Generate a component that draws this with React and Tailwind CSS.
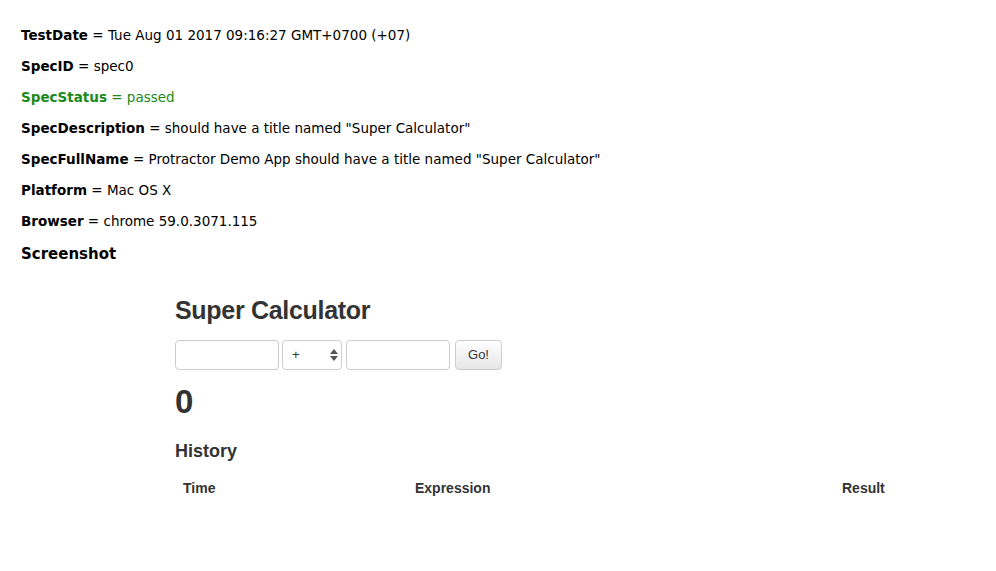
import React from 'react';

const rows = [
    ['TestDate', 'Tue Aug 01 2017 09:16:27 GMT+0700 (+07)'],
    ['SpecID', 'spec0'],
    ['SpecStatus', 'passed', true],
    ['SpecDescription', 'should have a title named "Super Calculator"'],
    ['SpecFullName', 'Protractor Demo App should have a title named "Super Calculator"'],
    ['Platform', 'Mac OS X'],
    ['Browser', 'chrome 59.0.3071.115'],
];

const App = () => {
    return (
        <div className="min-h-[571px] bg-white text-black font-['DejaVu_Sans',sans-serif]">
            <div className="pl-[21px] pt-[25px]">
                {rows.map(([k, v, ok]) => (
                    <div key={k} className={`h-[31px] text-[13.5px] leading-[20px] ${ok ? 'text-[#1a8a1a]' : ''}`}>
                        <span className="font-bold">{k}</span> = {v}
                    </div>
                ))}
                <h3 className="mt-[2px] text-[15px] font-bold leading-[20px]">Screenshot</h3>
            </div>

            {/* captured page */}
            <div className="pl-[175px] pt-[31px] font-['Liberation_Sans',Arial,sans-serif] text-[#333]">
                <h1 className="text-[25px] font-bold leading-[30px] tracking-[-0.3px]">Super Calculator</h1>
                <div className="mt-[15px] flex items-center">
                    <input className="w-[104px] h-[30px] rounded-[4px] border border-[#ccc] bg-white" />
                    <div className="ml-[3px] w-[60px] h-[30px] rounded-[4px] border border-[#ccc] bg-white flex items-center justify-between pl-[9px] pr-[3px] text-[13px]">
                        <span>+</span>
                        <svg width="8" height="12" viewBox="0 0 8 12" className="fill-[#555]">
                            <path d="M4 0 L8 5 L0 5 Z" />
                            <path d="M0 7 L8 7 L4 12 Z" />
                        </svg>
                    </div>
                    <input className="ml-[4px] w-[104px] h-[30px] rounded-[4px] border border-[#ccc] bg-white" />
                    <button className="ml-[5px] w-[47px] h-[30px] rounded-[4px] border border-[#ccc] bg-gradient-to-b from-white to-[#e6e6e6] text-[13px] text-[#333]">
                        Go!
                    </button>
                </div>
                <div className="mt-[12px] text-[33px] font-bold leading-[40px]">0</div>
                <h4 className="mt-[18px] text-[18px] font-bold leading-[22px]">History</h4>
                <div className="mt-[16px] grid grid-cols-[240px_427px_80px] text-[14px] font-bold leading-[20px]">
                    <div className="pl-[8px]">Time</div>
                    <div>Expression</div>
                    <div>Result</div>
                </div>
            </div>
        </div>
    );
};

export default App;
